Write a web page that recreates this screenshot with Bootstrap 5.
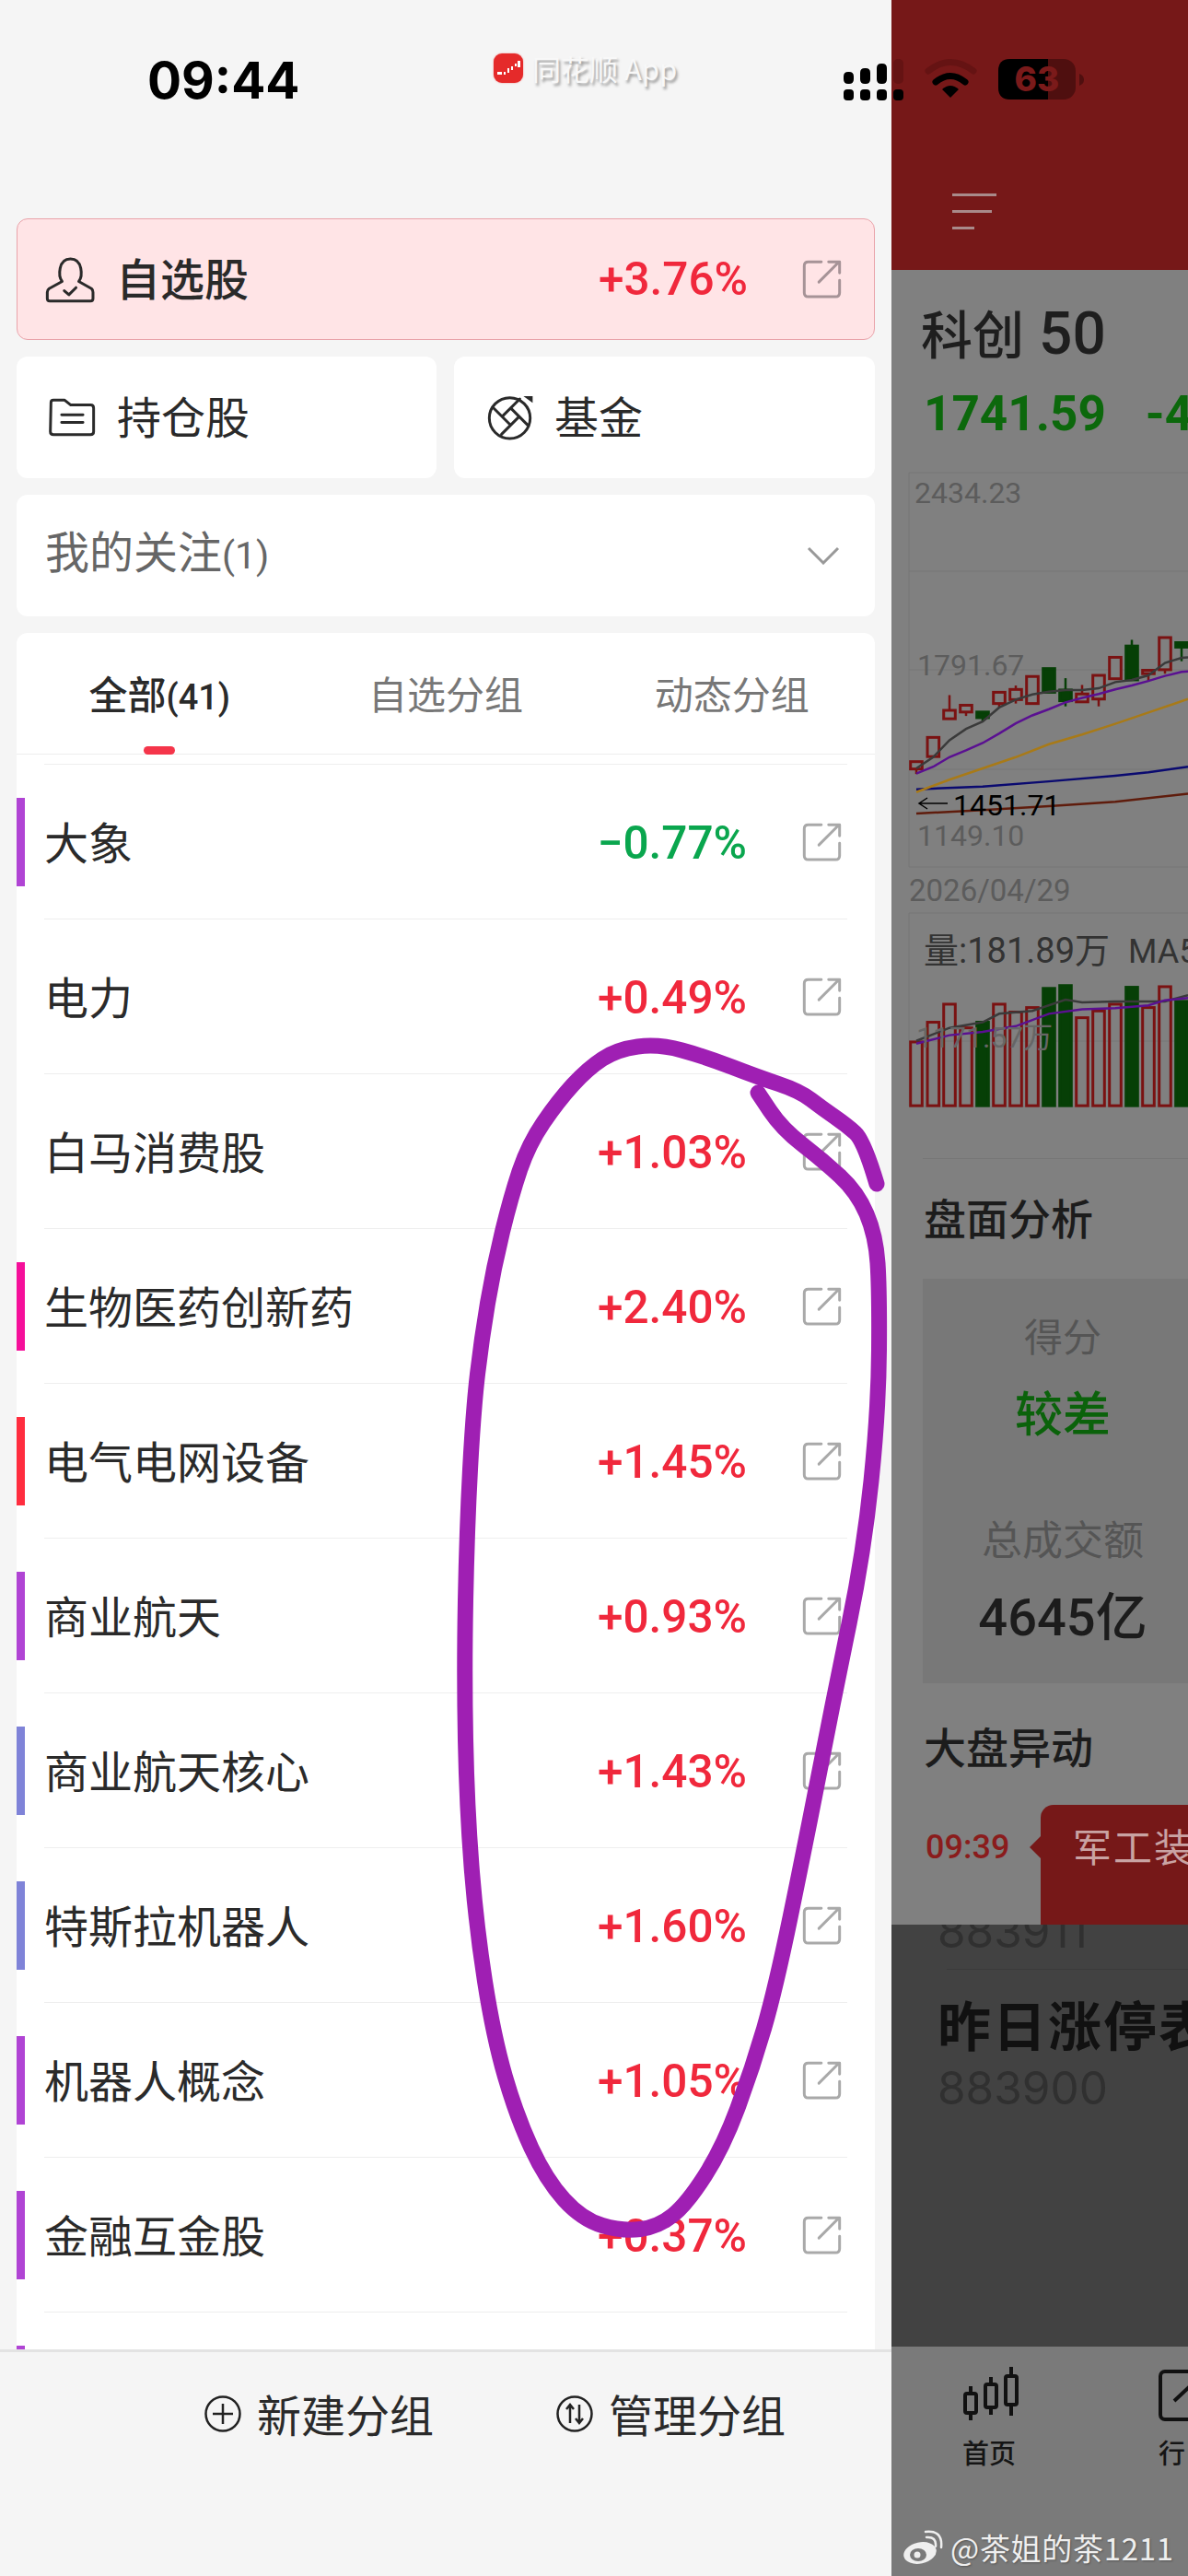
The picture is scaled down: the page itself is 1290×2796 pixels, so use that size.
<!DOCTYPE html>
<html lang="zh">
<head>
<meta charset="utf-8">
<title>同花顺</title>
<link href="https://cdn.jsdelivr.net/npm/bootstrap@5.3.0/dist/css/bootstrap.min.css" rel="stylesheet">
<style>
html,body{margin:0;background:#f5f5f5;}
body{font-family:"Noto Sans CJK SC","Liberation Sans",sans-serif;color:#2a2a2a;}
.screen{width:1290px;height:2796px;overflow:hidden;}
.drawer{width:968px;height:2796px;background:#f5f5f5;}
.drawer-body{padding:0 18px;}
.status-row{height:237px;}
.clock{font-family:Inter,"Liberation Sans",sans-serif;font-weight:700;font-size:55px;line-height:60px;color:#000;margin:57px 0 0 160px;width:376px;}
.app-tag{margin-top:58px;height:32px;}
.app-logo{width:32px;height:32px;border-radius:9px;background:#e52a2a;box-shadow:0 0 2px #f08a8a;}
.app-name{font-size:31px;line-height:32px;margin-left:10px;color:#f8f8f8;text-shadow:2px 3px 3px #9a9a9a;white-space:nowrap;}
.tile{background:#fff;border-radius:12px;height:132px;}
.tile-pink{background:#ffe4e6;border:1px solid #e9a3aa;margin-bottom:18px;padding:0 35px 0 29px;}
.tile-pair{gap:19px;margin-bottom:18px;}
.tile-half{width:456px;padding-left:34px;}
.tile-half.second{width:457px;}
.tile-watch{margin-bottom:18px;padding:0 38px 0 31px;color:#666;}
.t-48{font-size:48px;line-height:60px;}
.tile .t-48{margin-bottom:7px;}
.row-main .t-48{margin-bottom:3px;}
.t-strong{font-weight:500;}
.latin{font-family:Roboto,sans-serif;font-size:41px;}
.latin-tab{font-family:Roboto,sans-serif;font-size:38px;}
.pct{font-family:Roboto,"Liberation Sans",sans-serif;font-weight:500;font-size:49.5px;line-height:60px;}
.up{color:#f0283c;}
.down{color:#0aa64e;}
.share{width:43px;height:43px;flex:none;fill:none;stroke:#a9a9a9;stroke-width:9;stroke-linecap:round;stroke-linejoin:round;}
.tile-pink .share{stroke:#a69397;margin-left:59px;}
.ico{flex:none;fill:none;stroke:#2a2a2a;stroke-width:9;stroke-linecap:round;stroke-linejoin:round;}
.tabs-box{background:#fff;border-radius:12px 12px 0 0;height:132px;border-bottom:1px solid #eeeeee;}
.tab-cell{flex:1 1 0;text-align:center;font-size:42px;line-height:50px;color:#777;position:relative;height:131px;padding-top:40px;}
.tab-cell.on{color:#2a2a2a;font-weight:500;}
.tab-cell.on::after{content:"";position:absolute;left:138px;width:34px;bottom:-1px;height:9px;border-radius:5px;background:#f5354a;}
.list-box{background:#fff;height:1731px;overflow:hidden;padding-top:11px;}
.top-rule{height:1px;background:#eee;margin:-1px 30px 0 30px;}
.row-item{height:168px;display:flex;align-items:center;}
.side-bar{width:9px;height:96px;flex:none;}
.row-main{flex:1;height:168px;margin:0 30px 0 21px;border-bottom:1px solid #eeeeee;padding:0 6px 0 0;}
.row-main .pct{margin-left:auto;margin-top:2px;}
.row-main .share{margin-left:60px;margin-top:2px;}
.foot{height:246px;border-top:3px solid #e3e3e3;padding:36px 0 0 222px;}
.foot-txt{font-size:48px;line-height:60px;color:#2a2a2a;margin-left:17px;}
.foot-ico{margin-top:11px;flex:none;}
.foot-gap{margin-left:133px;}
.panel{width:322px;height:2796px;background:#808080;overflow:hidden;}
.panel-head{height:293px;background:#761818;padding:210px 0 0 66px;}
.burger{height:3px;background:#a98a8a;margin-bottom:15px;}
.ttl{font-size:56px;line-height:62px;height:62px;font-weight:500;color:#1e1e1e;margin:36px 0 0 32px;white-space:nowrap;}
.ttl span{font-family:Roboto,sans-serif;font-size:64px;margin-left:16px;}
.quote{font-family:Roboto,"Liberation Sans",sans-serif;font-weight:700;font-size:53px;line-height:56px;color:#0c680c;margin:30px 0 0 35px;white-space:nowrap;}
.quote span{margin-left:43px;}
.chart{display:block;margin-top:28px;}
.rule-a{border-top:1px solid #767676;margin:47px 0 0 34px;}
.sec{font-size:46px;line-height:60px;font-weight:500;color:#1c1c1c;margin:32px 0 0 35px;}
.score{background:#787878;height:439px;margin:38px 0 0 34px;padding-top:36px;}
.score-col{width:304px;text-align:center;}
.lab{font-size:42px;line-height:50px;color:#555;}
.lab-wide{font-size:44px;}
.val-g{font-size:52px;line-height:60px;font-weight:500;color:#0b620b;margin:28px 0 82px;}
.val-k{font-size:56px;line-height:60px;height:60px;font-weight:500;color:#1c1c1c;margin-top:32px;font-family:Roboto,"Noto Sans CJK SC",sans-serif;}
.alert-row{height:130px;}
.alert-time{font-family:Roboto,sans-serif;font-weight:500;font-size:36px;line-height:44px;color:#8a1c1c;margin:24px 0 0 37px;width:125px;flex:none;white-space:nowrap;}
.alert-tag{background:#761818;border-radius:14px 0 0 0;flex:1;min-width:0;height:150px;position:relative;padding:19px 0 0 35px;font-size:42px;line-height:50px;color:#c9a3a3;white-space:nowrap;letter-spacing:2px;}
.alert-tag::before{content:"";position:absolute;left:-12px;top:34px;border-style:solid;border-width:12px 12px 12px 0;border-color:transparent #761818 transparent transparent;}
.dark{height:458px;background:#424242;overflow:hidden;position:relative;padding-left:50px;}
.code{font-family:Inter,Roboto,sans-serif;font-size:49.5px;line-height:50px;color:#303030;white-space:nowrap;}
.rule-d{border-top:1px solid #3a3a3a;margin:16px 0 0 10px;}
.big{font-size:58px;line-height:70px;font-weight:700;color:#111;margin-top:23px;white-space:nowrap;letter-spacing:2px;}
.tabbar{height:249px;background:#7a7a7a;padding:21px 0 0 77px;}
.tab-lab{font-size:29px;line-height:40px;font-weight:500;color:#151515;margin-top:13px;white-space:nowrap;}
.tab-two{margin-left:151px;}
.over{position:absolute;left:0;top:0;pointer-events:none;}
.mark-text{position:absolute;left:1032px;top:2742px;font-size:33px;line-height:46px;color:#efefef;white-space:nowrap;text-shadow:1px 1px 2px #555;letter-spacing:.7px;font-family:"Noto Sans CJK SC",sans-serif;}
</style>
</head>
<body>
<svg width="0" height="0" class="position-absolute">
  <symbol id="ext" viewBox="1115 35 130 130">
    <path d="M1178 42H1135Q1122 42 1122 55V143Q1122 156 1135 156H1225Q1238 156 1238 143V102"/>
    <path d="M1170 108L1236 42M1202 42H1238V78"/>
  </symbol>
</svg>
<div class="screen position-relative d-flex">
  <div class="drawer d-flex flex-column flex-shrink-0">
    <div class="status-row d-flex">
      <div class="clock">09:44</div>
      <div class="app-tag d-flex align-items-center">
        <svg class="app-logo" viewBox="0 0 32 32"><path d="M4 20h5v3H4zM11 20h2v3h-2zM15 16h2v5h-2zM19 14h2v4h-2zM23 11h2v3h-2zM26 8h3v7h-3z" fill="#fff"/></svg>
        <span class="app-name">同花顺 App</span>
      </div>
    </div>
    <div class="drawer-body flex-grow-1">
      <div class="tile tile-pink d-flex align-items-center">
        <svg class="ico" width="57" height="52" viewBox="60 50 170 155"><path d="M118 135C105 118 105 62 145 62C185 62 185 118 172 135L213 158Q218 162 218 170V190Q218 198 210 198H78Q70 198 70 190V170Q70 162 76 158Z"/><path d="M125 165L140 178L163 155"/></svg>
        <span class="t-48 t-strong" style="margin-left:21px">自选股</span>
        <span class="pct up ms-auto">+3.76%</span>
        <svg class="share"><use href="#ext"/></svg>
      </div>
      <div class="d-flex tile-pair">
        <div class="tile tile-half d-flex align-items-center">
          <svg class="ico" width="53" height="43" viewBox="65 515 160 130"><path d="M75 530Q75 522 83 522H120L140 538H205Q215 538 215 548V625Q215 635 205 635H83Q73 635 73 625Z"/><path d="M110 570H180M110 595H180"/></svg>
          <span class="t-48" style="margin-left:22px">持仓股</span>
        </div>
        <div class="tile tile-half second d-flex align-items-center">
          <svg class="ico" width="53" height="52" viewBox="80 470 160 155" style="margin-left:1px"><circle cx="157" cy="550" r="67"/><path d="M105 518L160 573M130 603L188 545M215 572L160 517M132 545L190 487"/><path d="M202 478H232V500Z" fill="#2a2a2a" stroke="none"/></svg>
          <span class="t-48" style="margin-left:21px">基金</span>
        </div>
      </div>
      <div class="tile tile-watch d-flex align-items-center justify-content-between">
        <span class="t-48">我的关注<span class="latin">(1)</span></span>
        <svg width="36" height="20" viewBox="0 0 36 20" fill="none" stroke="#999" stroke-width="3"><path d="M2 2L18 18L34 2"/></svg>
      </div>
      <div class="tabs-box d-flex">
        <div class="tab-cell on">全部<span class="latin-tab">(41)</span></div>
        <div class="tab-cell">自选分组</div>
        <div class="tab-cell">动态分组</div>
      </div>
      <div class="list-box">
        <div class="top-rule"></div>
        <div id="rows"></div>
      </div>
    </div>
    <div class="foot d-flex align-items-start">
      <svg class="foot-ico" width="40" height="40" viewBox="0 0 40 40" fill="none" stroke="#222" stroke-width="2.5"><circle cx="20" cy="20" r="18.5"/><path d="M20 9V31M9 20H31"/></svg>
      <span class="foot-txt">新建分组</span>
      <svg class="foot-ico foot-gap" width="40" height="40" viewBox="0 0 40 40" fill="none" stroke="#222" stroke-width="2.5"><circle cx="20" cy="20" r="18.5"/><path d="M15 10V30M11 15L15 10L19 15M25 10V30M21 25L25 30L29 25"/></svg>
      <span class="foot-txt">管理分组</span>
    </div>
  </div>

  <div class="panel flex-shrink-0">
    <div class="panel-head">
      <div class="burger" style="width:48px"></div>
      <div class="burger" style="width:43px"></div>
      <div class="burger" style="width:24px"></div>
    </div>
    <div class="ttl">科创<span>50</span></div>
    <div class="quote">1741.59<span>-4</span></div>
    <svg class="chart" id="chart" width="322" height="705" viewBox="968 505 322 705"></svg>
    <div class="rule-a"></div>
    <div class="sec">盘面分析</div>
    <div class="score">
      <div class="score-col">
        <div class="lab">得分</div>
        <div class="val-g">较差</div>
        <div class="lab lab-wide">总成交额</div>
        <div class="val-k">4645亿</div>
      </div>
    </div>
    <div class="sec" style="margin-top:37px">大盘异动</div>
    <div class="alert-row d-flex overflow-hidden" style="margin-top:35px">
      <div class="alert-time">09:39</div>
      <div class="alert-tag">军工装</div>
    </div>
    <div class="dark">
      <div class="code" style="margin-top:-18px">883911</div>
      <div class="rule-d"></div>
      <div class="big">昨日涨停表</div>
      <div class="code" style="margin-top:10px">883900</div>
    </div>
    <div class="tabbar d-flex">
      <div>
        <svg width="62" height="60" viewBox="0 0 62 60" fill="none" stroke="#111" stroke-width="4" class="d-block"><path d="M9 22V59M31 12V53M53 1V54"/><rect x="3" y="30" width="12" height="21" rx="2" fill="#7a7a7a"/><rect x="25" y="20" width="12" height="25" rx="2" fill="#7a7a7a"/><rect x="47" y="11" width="12" height="31" rx="2" fill="#7a7a7a"/></svg>
        <div class="tab-lab">首页</div>
      </div>
      <div class="tab-two">
        <svg width="60" height="60" viewBox="0 0 60 60" fill="none" stroke="#111" stroke-width="4" class="d-block" style="margin-top:4px;margin-bottom:-4px"><rect x="2" y="2" width="52" height="52" rx="5"/><path d="M17 34L32 20L47 34"/></svg>
        <div class="tab-lab">行</div>
      </div>
    </div>
  </div>

  <svg class="over" width="1290" height="2796" viewBox="0 0 1290 2796">
    <g>
      <path d="M916 83q0-5 5-5h1q5 0 5 5v3q0 5-5 5h-1q-5 0-5-5zM934 79q0-5 5-5h1q5 0 5 5v7q0 5-5 5h-1q-5 0-5-5zM952 74q0-5 5-5h1q5 0 5 5v12q0 5-5 5h-1q-5 0-5-5z" fill="#000"/>
      <rect x="970" y="64" width="11" height="27" rx="5" fill="#651313"/>
      <rect x="916" y="97" width="11" height="12" rx="4" fill="#000"/><rect x="934" y="97" width="11" height="12" rx="4" fill="#000"/><rect x="952" y="97" width="11" height="12" rx="4" fill="#000"/><rect x="970" y="97" width="11" height="12" rx="4" fill="#000"/>
      <path d="M1008 77Q1032 58 1057 77" fill="none" stroke="#651313" stroke-width="7" stroke-linecap="round"/>
      <path d="M1016 89Q1032 76 1048 89" fill="none" stroke="#000" stroke-width="7" stroke-linecap="round"/>
      <path d="M1023 97Q1032 89 1041 97L1032 106Z" fill="#000"/>
      <rect x="1084" y="64" width="84" height="44" rx="13" fill="#4f0f0f"/>
      <path d="M1097 64H1138V108H1097Q1084 108 1084 95V77Q1084 64 1097 64Z" fill="#000"/>
      <path d="M1172 80Q1177 82 1177 86.500Q1177 91 1172 93Z" fill="#4f0f0f"/>
      <text x="1126" y="99" text-anchor="middle" font-family="Inter,Liberation Sans,sans-serif" font-weight="800" font-size="37" fill="#7a1a1a">63</text>
    </g>
    <path id="scribble" fill="none" stroke="#9f1fb3" stroke-width="17" stroke-linecap="round" stroke-linejoin="round"/>
    <g>
      <ellipse cx="999" cy="2771" rx="18" ry="11.500" fill="#efefef" transform="rotate(-12 999 2771)"/>
      <ellipse cx="997" cy="2773" rx="9" ry="7" fill="#7a7a7a"/>
      <circle cx="996" cy="2773" r="3.500" fill="#efefef"/>
      <path d="M1006 2754Q1017 2753 1016 2764M1005 2748Q1024 2746 1022 2765" fill="none" stroke="#efefef" stroke-width="2.500" stroke-linecap="round"/>
    </g>
  </svg>
  <div class="mark-text">@茶姐的茶1211</div>
</div>

<script src="https://cdn.jsdelivr.net/npm/bootstrap@5.3.0/dist/js/bootstrap.bundle.min.js"></script>
<script>
(function(){
  var P='#b044d4',B='#7f83d8';
  var data=[['大象','-0.77%',P,1],['电力','+0.49%',''],['白马消费股','+1.03%',''],['生物医药创新药','+2.40%','#f50f9a'],['电气电网设备','+1.45%','#ff2d3f'],['商业航天','+0.93%',P],['商业航天核心','+1.43%',B],['特斯拉机器人','+1.60%',B],['机器人概念','+1.05%',P],['金融互金股','+0.37%',P]];
  document.getElementById('rows').innerHTML=data.map(function(d){
    var txt=d[3]?'\u2212'+d[1].slice(1):d[1];
    return '<div class="row-item"><div class="side-bar"'+(d[2]?' style="background:'+d[2]+'"':'')+'></div>'+
      '<div class="row-main d-flex align-items-center"><span class="t-48">'+d[0]+'</span><span class="pct '+(d[3]?'down':'up')+'">'+txt+'</span>'+
      '<svg class="share"><use href="#ext"/></svg></div></div>';
  }).join('')+'<div class="row-item"><div class="side-bar" style="background:'+P+'"></div></div>';

  // hand-drawn ring
  var p=[[952,1285],[938,1238],[919,1221],[893,1203],[868,1184],[823,1169],[766,1147],[715,1133],[670,1139],[638,1160],[606,1195],[574,1242],[555,1298],[536,1376],[523,1453],[514,1530],[507,1660],[504,1815],[507,1961],[517,2090],[536,2211],[561,2297],[593,2366],[632,2409],[676,2422],[715,2417],[746,2392],[785,2331],[817,2245],[842,2159],[874,2004],[906,1840],[938,1685],[954,1530],[955,1401],[951,1341],[931,1294],[893,1259],[849,1225],[823,1186]];
  var d='M'+p[0][0]+' '+p[0][1];
  for(var i=1;i<p.length-1;i++){var mx=(p[i][0]+p[i+1][0])/2,my=(p[i][1]+p[i+1][1])/2;d+='Q'+p[i][0]+' '+p[i][1]+' '+mx+' '+my;}
  d+='L'+p[p.length-1][0]+' '+p[p.length-1][1];
  document.getElementById('scribble').setAttribute('d',d);

  // chart, points read off the reference in zoom units
  var X=function(z){return 960+z/3},Y=function(z){return 280+z*.6122};
  var s='',R='#7a1212',G='#063f06',W=14.6;
  function line(a,b,c,e,col,w){s+='<line x1="'+a+'" y1="'+b+'" x2="'+c+'" y2="'+e+'" stroke="'+col+'" stroke-width="'+(w||1)+'"/>';}
  line(987,513,1290,513,'#767676');line(987,513,987,941,'#767676');line(987,620,1290,620,'#767676');line(987,727,1290,727,'#767676');line(987,835,1290,835,'#767676');line(987,941,1290,941,'#767676');
  line(987,991,1290,991,'#767676');line(987,991,987,1201,'#767676');line(987,1130,1290,1130,'#767676');line(987,1201,1290,1201,'#767676');
  var c=[[105,893,906,893,915,0],[160,850,884,850,884,0],[213,802,817,775,817,0],[267,793,805,793,812,0],[321,805,815,805,822,1],[375,770,790,770,797,0],[429,765,783,758,790,0],[483,742,790,742,790,0],[537,728,770,728,770,1],[591,766,785,745,795,1],[645,773,787,757,787,0],[699,740,782,740,795,0],[753,708,746,708,746,0],[807,688,748,677,748,1],[861,731,737,731,750,0],[915,673,730,673,737,0],[969,682,690,682,715,1]];
  c.forEach(function(k){
    var x=X(k[0]),col=k[5]?G:R;
    line(x,Y(k[3]),x,Y(k[4]),col,2.5);
    s+='<rect x="'+(x-W/2+1)+'" y="'+Y(k[1])+'" width="'+(W-2)+'" height="'+(Y(k[2])-Y(k[1]))+'" fill="'+(k[5]?G:'#808080')+'" stroke="'+col+'" stroke-width="3"/>';
  });
  function poly(a,col,w){s+='<polyline fill="none" stroke="'+col+'" stroke-width="'+(w||2.5)+'" points="'+a.map(function(q){return X(q[0])+','+Y(q[1])}).join(' ')+'"/>';}
  poly([[105,942],[321,937],[537,928],[753,918],[861,912],[990,902]],'#0a0a70');
  poly([[105,985],[321,979],[537,972],[753,964],[990,950]],'#5f1c0c');
  poly([[105,947],[213,925],[321,905],[429,885],[537,862],[645,845],[753,826],[861,806],[990,782]],'#a87a18');
  poly([[105,914],[160,902],[213,885],[267,873],[321,860],[375,843],[429,825],[483,811],[537,800],[591,788],[645,780],[699,773],[753,765],[807,758],[861,750],[915,741],[969,734],[990,733]],'#5a1091');
  poly([[105,905],[160,885],[213,855],[267,835],[321,822],[375,797],[429,783],[483,774],[537,769],[591,766],[645,766],[699,763],[753,752],[807,748],[861,740],[915,718],[969,709],[990,708]],'#3a3a3a');
  var v=[1390,1355,1323,1365,1355,1323,1337,1329,1295,1290,1347,1335,1323,1293,1329,1292,1318];
  c.forEach(function(k,i){
    var x=X(k[0]),col=k[5]?G:R;
    s+='<rect x="'+(x-W/2+1)+'" y="'+Y(v[i])+'" width="'+(W-2)+'" height="'+(Y(1503)-Y(v[i]))+'" fill="'+(k[5]?G:'none')+'" stroke="'+col+'" stroke-width="3"/>';
  });
  poly([[105,1388],[213,1365],[321,1355],[375,1340],[483,1335],[591,1315],[645,1320],[753,1318],[915,1318],[990,1307]],'#3a3a3a');
  poly([[105,1393],[213,1378],[321,1372],[429,1362],[537,1340],[645,1332],[753,1330],[861,1325],[915,1316],[990,1312]],'#5a1091');
  function t(x,y,str,size,col){s+='<text x="'+x+'" y="'+y+'" font-size="'+size+'" fill="'+col+'" font-family="Roboto,Noto Sans CJK SC,sans-serif">'+str+'</text>';}
  t(993,546,'2434.23',32,'#5c5c5c');t(996,733,'1791.67',32,'#5c5c5c');t(996,918,'1149.10',32,'#5c5c5c');
  s+='<path d="M1029 872H998M1007 866L998 872L1007 878" fill="none" stroke="#000" stroke-width="1.500"/>';
  t(1035,885,'1451.71',32,'#000');t(987,978,'2026/04/29',33,'#5c5c5c');
  t(1003,1045,'量:181.89万',38,'#333');t(1225,1045,'MA5',36,'#333');t(995,1137,'1171.57万',32,'#666');
  document.getElementById('chart').innerHTML=s;
})();
</script>
</body>
</html>
